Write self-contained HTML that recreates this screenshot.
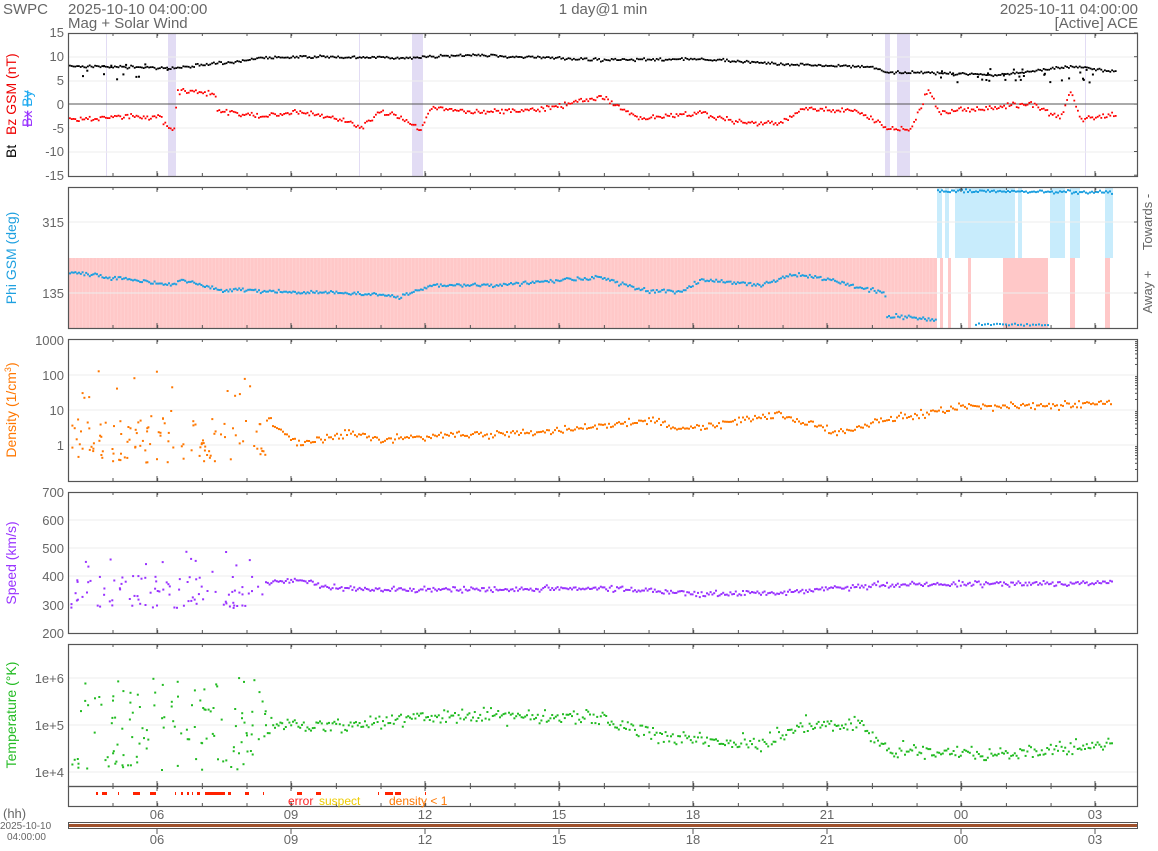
<!DOCTYPE html><html><head><meta charset="utf-8"><style>
body{margin:0;background:#fff;width:1158px;height:846px;overflow:hidden}
svg text{font-family:"Liberation Sans",sans-serif}
</style></head><body>
<svg id="s" width="1158" height="846" xmlns="http://www.w3.org/2000/svg"></svg>
<script>
var s=document.getElementById('s'),h='';
var seed=7;function r(){seed=(seed*16807)%2147483647;return seed/2147483647;}
function g(){return (r()+r()+r()-1.5)/1.5;}
function T(x,y,t,c,sz,anc,extra){h+='<text x="'+x+'" y="'+y+'" fill="'+(c||'#666')+'" font-size="'+(sz||13)+'" text-anchor="'+(anc||'start')+'" '+(extra||'')+'>'+t+'</text>';}
function R(x,y,w,hh,c,o){h+='<rect x="'+x+'" y="'+y+'" width="'+w+'" height="'+hh+'" fill="'+c+'"'+(o?' opacity="'+o+'"':'')+'/>';}
function L(x1,y1,x2,y2,c,w){h+='<line x1="'+x1+'" y1="'+y1+'" x2="'+x2+'" y2="'+y2+'" stroke="'+c+'" stroke-width="'+(w||1)+'"/>';}
function interp(pts,x){for(var i=0;i<pts.length-1;i++){if(x<=pts[i+1][0]){var a=pts[i],b=pts[i+1];return a[1]+(b[1]-a[1])*(x-a[0])/(b[0]-a[0]);}}return pts[pts.length-1][1];}
var X0=68,X1=1138,maj=[157,291,425,559,693,827,961,1095];
function frame(y0,y1){
 for(var i=0;i<maj.length;i++){L(maj[i],y0,maj[i],y0+5,'#555');L(maj[i],y1,maj[i],y1-5,'#555');}
 for(var x=113;x<X1;x+=44.67){L(x,y0,x,y0+3,'#555');L(x,y1,x,y1-3,'#555');}
}
function box(y0,y1){h+='<rect x="68.5" y="'+(y0+.5)+'" width="1069" height="'+(y1-y0)+'" fill="none" stroke="#555" stroke-width="1.2"/>';}
function grid(y){L(X0,y,X1,y,'#eee');}
function pts(curve,c,x0,x1,step,noise,sz){for(var x=x0;x<x1;x+=step){var y=interp(curve,x)+g()*noise;R(x.toFixed(1),(y-sz/2).toFixed(1),sz,sz,c);}}
function scat(x0,x1,n,ya,yb,c,sz){for(var i=0;i<n;i++){var x=x0+r()*(x1-x0),y=ya+r()*(yb-ya);R(x.toFixed(1),y.toFixed(1),sz,sz,c);}}
// header
T(3,14,'SWPC','#666',15);T(68,14,'2025-10-10 04:00:00','#666',15);T(68,28,'Mag + Solar Wind','#666',15);
T(603,14,'1 day@1 min','#666',15,'middle');T(1138,14,'2025-10-11 04:00:00','#666',15,'end');T(1138,28,'[Active] ACE','#666',15,'end');
// panel1
var a=33,b=176;
[[106,1],[168,8],[359,1],[412,11],[885,5],[897,13],[1085,1]].forEach(function(v){R(v[0],a,v[1],b-a,'#e2dcf4');});
[57,81,128,152].forEach(grid);L(X0,104,X1,104,'#555');
[[15,37],[10,61],[5,85],[0,109],[-5,133],[-10,156],[-15,180]].forEach(function(v){T(64,v[1],v[0],'#666',13,'end');});
for(var i=0;i<7;i++){var yy=a+i*23.7;L(X1,yy,X1-4,yy,'#555');}
var bt=[[68,66],[175,68],[230,62],[260,58],[290,57],[340,57],[400,58],[470,55],[600,60],[700,59],[780,64],[870,67],[885,72],[960,74],[1000,75],[1070,66],[1110,71]];
pts(bt,'#000',69,1115,1.8,2,1.8);scat(70,170,12,62,80,'#000',2);scat(940,1110,30,68,82,'#000',2);
var bz=[[68,119],[100,118],[130,116],[160,118],[168,130],[174,129],[176,91],[215,94],[216,110],[260,117],[300,112],[350,122],[360,127],[380,111],[400,117],[420,129],[430,108],[480,113],[540,109],[600,97],[640,119],[700,113],[740,123],[780,123],[800,110],[850,110],[870,118],[885,128],[910,131],[928,88],[938,112],[990,108],[1030,103],[1060,118],[1070,90],[1080,120],[1110,115]];
pts(bz,'#f00',69,1115,1.8,4,1.8);
T(0,0,'Bt','#000',14,'start','transform="translate(16,158) rotate(-90)"');
T(0,0,'Bz GSM (nT)','#e00',14,'start','transform="translate(16,135) rotate(-90)"');
T(0,0,'<tspan fill="#9933ff" text-decoration="line-through">Bx</tspan> <tspan fill="#1eaaf0" text-decoration="line-through">By</tspan>','#000',14,'start','transform="translate(32,127) rotate(-90)"');
frame(a,b);box(a,b);
// panel2
a=187;b=328;
R(69,258,868,70,'#ffc8c8');
for(var x=72;x<936;x+=3.5){L(x,258,x,328,'#ffd6d6',0.6);}
[[937,5],[945,4],[955,60],[1018,4],[1050,15],[1070,10],[1105,8]].forEach(function(v){R(v[0],a,v[1],71,'#c8ecfc');});
[[940,3],[948,3],[968,3],[1003,45],[1070,5],[1105,5]].forEach(function(v){R(v[0],258,v[1],70,'#ffc8c8');});
grid(222);grid(293);T(64,227,'315','#666',13,'end');T(64,298,'135','#666',13,'end');
L(X1,222,X1-4,222,'#555');L(X1,293,X1-4,293,'#555');
var ph=[[68,272],[170,285],[180,280],[220,290],[300,292],[340,293],[400,297],[430,285],[500,285],[600,277],[640,290],[680,292],[700,280],[760,285],[790,275],[820,278],[870,290],[884,292],[886,316],[935,320]];
pts(ph,'#1ea0e0',69,936,1.8,3,2);
pts([[937,191],[1110,192]],'#1ea0e0',937,1112,2,2.5,2);
pts([[975,324],[1050,325]],'#1ea0e0',975,1050,3,1.5,2);
T(0,0,'Phi GSM (deg)','#1ea0e0',14,'middle','transform="translate(16,258) rotate(-90)"');
T(0,0,'Away +','#666',13,'middle','transform="translate(1152,292) rotate(-90)"');
T(0,0,'Towards -','#666',13,'middle','transform="translate(1152,222) rotate(-90)"');
frame(a,b);box(a,b);
// panel3
a=339;b=481;
[375,410,445].forEach(grid);
[['1000',345],['100',380],['10',415],['1',450]].forEach(function(v){T(64,v[1],v[0],'#666',13,'end');});
for(var d=0;d<4;d++){for(var k=2;k<10;k++){var yy=340+d*35+35-35*Math.log10(k);L(X1,yy,X1-3,yy,'#555');}}
scat(70,268,110,415,462,'#f70',2);scat(80,268,14,370,415,'#f70',2);
var dn=[[268,420],[280,430],[300,445],[350,432],[380,440],[450,435],[550,432],[650,420],[680,430],[780,415],[840,433],[880,420],[930,413],[960,407],[1050,406],[1110,403]];
pts(dn,'#f70',268,1112,2,6,2);
T(0,0,'Density (1/cm<tspan font-size="9" dy="-5">3</tspan><tspan dy="5">)</tspan>','#f70',14,'middle','transform="translate(16,410) rotate(-90)"');
frame(a,b);box(a,b);
// panel4
a=492;b=633;
[520,548,576,605].forEach(grid);
[[700,497],[600,525],[500,553],[400,581],[300,610],[200,638]].forEach(function(v){T(64,v[1],v[0],'#666',13,'end');});
scat(70,265,90,575,608,'#93f',2);scat(80,265,12,550,575,'#93f',2);
var sp=[[265,583],[300,580],[330,588],[400,590],[600,588],[700,594],[780,593],[880,585],[1000,584],[1110,583]];
pts(sp,'#93f',265,1112,1.8,4,2);
T(0,0,'Speed (km/s)','#93f',14,'middle','transform="translate(16,563) rotate(-90)"');
frame(a,b);box(a,b);
// panel5
a=644;b=786;
[678,725,772].forEach(grid);
T(64,683,'1e+6','#666',13,'end');T(64,730,'1e+5','#666',13,'end');T(64,777,'1e+4','#666',13,'end');
scat(70,265,110,690,770,'#2b2',2);scat(80,265,12,675,690,'#2b2',2);
var tp=[[265,725],[350,725],[450,715],[600,718],[650,735],[760,745],[800,725],[860,725],[890,750],[1000,755],[1110,745]];
pts(tp,'#2b2',265,1112,1.8,11,2);
T(0,0,'Temperature (°K)','#2b2',14,'middle','transform="translate(16,715) rotate(-90)"');
frame(a,b);box(a,b);
// flags
a=786;b=806;
[[96,2],[102,5],[118,1],[133,7],[150,6],[175,1],[181,2],[187,2],[192,1],[197,3],[205,10],[215,10],[228,3],[245,4],[263,1],[297,5],[316,5],[378,1],[385,8],[395,6],[425,1]].forEach(function(v){R(v[0],792,v[1],3,'#f20');});
frame(a,b);box(a,b);
T(288,805,'error','#f22',12);T(319,805,'suspect','#ec0',12);T(389,805,'density &lt; 1','#f70',12);
// time labels
T(3,818,'(hh)','#666',13);
maj.forEach(function(x,i){var l=['06','09','12','15','18','21','00','03'][i];T(x,819,l,'#666',13,'middle');T(x,844,l,'#666',13,'middle');});
h+='<rect x="68.5" y="822.5" width="1069" height="6" fill="none" stroke="#555"/>';R(69,824,1068,3,'#a0522d');
for(var i=0;i<maj.length;i++){L(maj[i],829,maj[i],834,'#555');}
T(0,829,'2025-10-10','#666',10);T(7,840,'04:00:00','#666',10);
s.innerHTML=h;
</script></body></html>
